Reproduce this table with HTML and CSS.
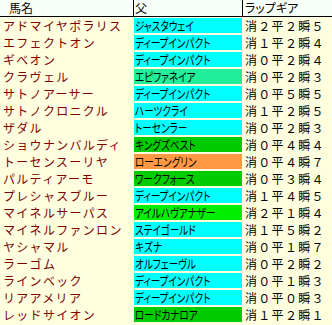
FILE: index.html
```html
<!DOCTYPE html>
<html lang="ja">
<head>
<meta charset="utf-8">
<link rel="stylesheet" href="styles.css">
</head>
<body>
<div class="table">
  <div class="head">
    <div class="hc">馬名</div>
    <div class="hc sep">父</div>
    <div class="hc sep">ラップギア</div>
  </div>
  <div class="rows">
    <div class="row"><div class="name">アドマイヤポラリス</div><div class="sire cyan"><span>ジャスタウェイ</span></div><div class="lap">消２平２瞬５</div></div>
    <div class="row"><div class="name">エフェクトオン</div><div class="sire cyan"><span>ディープインパクト</span></div><div class="lap">消１平２瞬４</div></div>
    <div class="row"><div class="name">ギベオン</div><div class="sire cyan"><span>ディープインパクト</span></div><div class="lap">消０平２瞬４</div></div>
    <div class="row"><div class="name">クラヴェル</div><div class="sire spring"><span>エピファネイア</span></div><div class="lap">消０平２瞬３</div></div>
    <div class="row"><div class="name">サトノアーサー</div><div class="sire cyan"><span>ディープインパクト</span></div><div class="lap">消０平５瞬５</div></div>
    <div class="row"><div class="name">サトノクロニクル</div><div class="sire cyan"><span>ハーツクライ</span></div><div class="lap">消１平２瞬５</div></div>
    <div class="row"><div class="name">ザダル</div><div class="sire cyan"><span>トーセンラー</span></div><div class="lap">消０平２瞬３</div></div>
    <div class="row"><div class="name">ショウナンバルディ</div><div class="sire green"><span>キングズベスト</span></div><div class="lap">消０平４瞬４</div></div>
    <div class="row"><div class="name">トーセンスーリヤ</div><div class="sire orange"><span>ローエングリン</span></div><div class="lap">消０平４瞬７</div></div>
    <div class="row"><div class="name">パルティアーモ</div><div class="sire green"><span>ワークフォース</span></div><div class="lap">消０平３瞬４</div></div>
    <div class="row"><div class="name">プレシャスブルー</div><div class="sire cyan"><span>ディープインパクト</span></div><div class="lap">消１平４瞬５</div></div>
    <div class="row"><div class="name">マイネルサーパス</div><div class="sire lime"><span>アイルハヴアナザー</span></div><div class="lap">消２平１瞬４</div></div>
    <div class="row"><div class="name">マイネルファンロン</div><div class="sire cyan"><span>ステイゴールド</span></div><div class="lap">消１平５瞬２</div></div>
    <div class="row"><div class="name">ヤシャマル</div><div class="sire cyan"><span>キズナ</span></div><div class="lap">消０平１瞬７</div></div>
    <div class="row"><div class="name">ラーゴム</div><div class="sire cyan"><span>オルフェーヴル</span></div><div class="lap">消０平２瞬２</div></div>
    <div class="row"><div class="name">ラインベック</div><div class="sire cyan"><span>ディープインパクト</span></div><div class="lap">消０平１瞬３</div></div>
    <div class="row"><div class="name">リアアメリア</div><div class="sire cyan"><span>ディープインパクト</span></div><div class="lap">消０平０瞬３</div></div>
    <div class="row"><div class="name">レッドサイオン</div><div class="sire green"><span>ロードカナロア</span></div><div class="lap">消１平２瞬１</div></div>
  </div>
</div>
</body>
</html>
```
FILE: styles.css
```css
html, body {
  margin: 0;
  padding: 0;
  background: #ffffe0;
}
body {
  width: 332px;
  height: 325px;
  overflow: hidden;
  font-family: "Noto Sans CJK JP", "Noto Sans", sans-serif;
}
.table {
  display: flex;
  flex-direction: column;
}
.head {
  display: grid;
  grid-template-columns: 133px 109px 1fr;
  height: 16px;
  border-bottom: 1px solid #000;
  background: #f8fff8;
}
.hc {
  font-size: 12px;
  line-height: 16px;
  padding-left: 9px;
  color: #000;
  white-space: nowrap;
}
.hc.sep {
  border-left: 1px solid #000;
  padding-left: 1px;
}
.hc.sep:last-child {
  padding-left: 2px;
  font-feature-settings: "palt";
}
.rows {
  display: flex;
  flex-direction: column;
  gap: 2px;
  padding-top: 1px;
}
.row {
  display: grid;
  grid-template-columns: 134px 108px 1fr;
  height: 15px;
}
.name {
  color: #800000;
  font-size: 12px;
  line-height: 15px;
  padding-left: 3px;
  letter-spacing: 1.3px;
  white-space: nowrap;
}
.sire {
  color: #000;
  font-size: 12px;
  line-height: 15px;
  padding-left: 1px;
  white-space: nowrap;
}
.sire span {
  display: inline-block;
  font-feature-settings: "palt";
  transform: scaleX(0.8);
  transform-origin: left center;
}
.lap {
  color: #000;
  font-size: 12px;
  line-height: 15px;
  padding-left: 3px;
  letter-spacing: 1.3px;
  white-space: nowrap;
}
.cyan { background: #00ffff; }
.spring { background: #22ee99; }
.green { background: #00cc00; }
.lime { background: #00ee00; }
.orange { background: #ff9944; }
```
